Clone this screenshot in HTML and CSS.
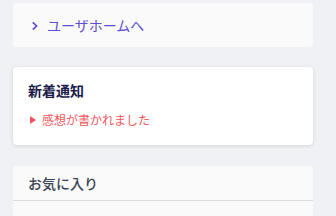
FILE: index.html
```html
<!DOCTYPE html>
<html lang="ja">
<head>
<meta charset="utf-8">
<link rel="stylesheet" href="styles.css">
</head>
<body>
<div class="page">
  <a class="card link-card" href="#">
    <svg class="chev" width="8" height="10" viewBox="0 0 8 10"><path d="M1.8 1.3 L5.6 5 L1.8 8.7" fill="none" stroke="#5a4fcf" stroke-width="1.7"/></svg>
    <span>ユーザホームへ</span>
  </a>
  <div class="card notice">
    <div class="notice-title">新着通知</div>
    <div class="notice-item">
      <svg class="tri" width="6" height="8" viewBox="0 0 6 8"><path d="M0 0 L6 4 L0 8 Z" fill="#f0565a"/></svg>
      <span>感想が書かれました</span>
    </div>
  </div>
  <div class="card fav">
    <div class="fav-head">お気に入り</div>
    <div class="fav-body"></div>
  </div>
</div>
</body>
</html>
```
FILE: styles.css
```css
html, body {
  margin: 0;
  padding: 0;
  background: #f0f1f4;
  font-family: "Noto Sans CJK JP", "Noto Sans", sans-serif;
  overflow: hidden;
}
.page {
  width: 300px;
  margin: 3px 0 0 13px;
  display: flex;
  flex-direction: column;
}
.card {
  border-radius: 4px;
}
.link-card {
  height: 44px;
  background: #fafafb;
  display: flex;
  align-items: center;
  padding-left: 18px;
  box-sizing: border-box;
  text-decoration: none;
  color: #5a4fcf;
  font-size: 14px;
  font-weight: 400;
}
.chev {
  margin-top: 1px;
  margin-right: 8px;
}
.notice {
  margin-top: 20px;
  background: #ffffff;
  box-shadow: 0 1px 4px rgba(0, 0, 0, 0.12);
  padding: 13px 15px 16px;
}
.notice-title {
  font-size: 14px;
  line-height: 20px;
  font-weight: bold;
  color: #1c1c4a;
}
.notice-item {
  margin-top: 11px;
  display: flex;
  align-items: center;
  font-size: 12px;
  line-height: 18px;
  font-weight: 400;
  color: #f0565a;
}
.tri {
  margin-left: 2px;
  margin-right: 6px;
}
.fav {
  margin-top: 21px;
  background: #fafafa;
  border-radius: 4px 4px 0 0;
}
.fav-head {
  height: 34px;
  line-height: 34px;
  padding-left: 15px;
  font-size: 14px;
  font-weight: 500;
  color: #3c4452;
  border-bottom: 1px solid #dcdde0;
}
.fav-body {
  height: 15px;
}
```
